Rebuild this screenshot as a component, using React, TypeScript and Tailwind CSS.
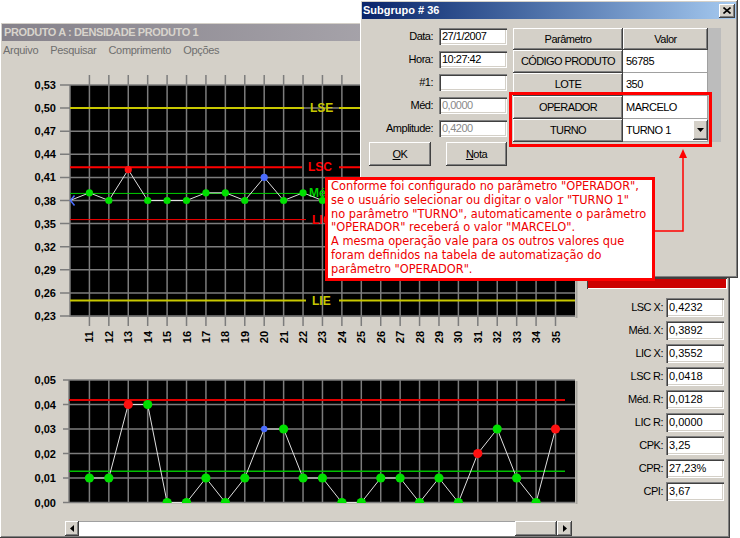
import React from "react";

const raised =
  "shadow-[inset_-1px_-1px_0_#404040,inset_1px_1px_0_#ffffff,inset_-2px_-2px_0_#808080]";
const sunken =
  "shadow-[inset_1px_1px_0_#808080,inset_2px_2px_0_#404040,inset_-1px_-1px_0_#ffffff,inset_-2px_-2px_0_#d4d0c8]";

const gx = (k: number) => 70 + 19.42 * k;
const uy = (v: number) => 85 + ((0.53 - v) / 0.03) * 23.1;
const ly = (v: number) => 380 + ((0.05 - v) / 0.05) * 122.5;

const GREEN = "#00e000";
const RED = "#ff1010";
const BLUE = "#4a6cff";

// subgroup 11..35 : [mean, range, colour of mean marker, colour of range marker]
const points: [number, number, string, string][] = [
  [0.39, 0.01, GREEN, GREEN],
  [0.38, 0.01, GREEN, GREEN],
  [0.42, 0.04, RED, RED],
  [0.38, 0.04, GREEN, GREEN],
  [0.38, 0.0, GREEN, GREEN],
  [0.38, 0.0, GREEN, GREEN],
  [0.39, 0.01, GREEN, GREEN],
  [0.39, 0.0, GREEN, GREEN],
  [0.38, 0.01, GREEN, GREEN],
  [0.41, 0.03, BLUE, BLUE],
  [0.38, 0.03, GREEN, GREEN],
  [0.39, 0.01, GREEN, GREEN],
  [0.38, 0.01, GREEN, GREEN],
  [0.38, 0.0, GREEN, GREEN],
  [0.39, 0.0, GREEN, GREEN],
  [0.38, 0.01, GREEN, GREEN],
  [0.39, 0.01, GREEN, GREEN],
  [0.38, 0.0, GREEN, GREEN],
  [0.38, 0.01, GREEN, GREEN],
  [0.39, 0.0, GREEN, GREEN],
  [0.38, 0.02, GREEN, RED],
  [0.39, 0.03, GREEN, GREEN],
  [0.38, 0.01, GREEN, GREEN],
  [0.38, 0.0, GREEN, GREEN],
  [0.39, 0.03, GREEN, RED],
];

const upperTicks = ["0,53", "0,50", "0,47", "0,44", "0,41", "0,38", "0,35", "0,32", "0,29", "0,26", "0,23"];
const lowerTicks = ["0,05", "0,04", "0,03", "0,02", "0,01", "0,00"];

const limits = [
  { label: "LSE", v: 0.5, color: "#c8c800", tx: 310, w: 2 },
  { label: "LSC", v: 0.4232, color: "#ff0000", tx: 308, w: 2 },
  { label: "Méd", v: 0.3892, color: "#00d000", tx: 309, w: 1 },
  { label: "LIC", v: 0.3552, color: "#ff0000", tx: 312, w: 1 },
  { label: "LIE", v: 0.25, color: "#c8c800", tx: 312, w: 2 },
];

function Charts() {
  const cols = points.map((_, i) => i + 1);
  const upperLine = [`70,${uy(0.38)}`, ...points.map((p, i) => `${gx(i + 1)},${uy(p[0])}`)].join(" ");
  const lowerLine = points.map((p, i) => `${gx(i + 1)},${ly(p[1])}`).join(" ");
  return (
    <svg width={578} height={461} fontFamily="'Liberation Sans', Arial, sans-serif">
      <defs>
        <clipPath id="lowclip">
          <rect x={69} y={378} width={506} height={125} />
        </clipPath>
      </defs>
      <g transform="translate(-2,-59)">
        {/* X-bar chart */}
        <rect x={70} y={85} width={505} height={231.5} fill="#000" />
        <line x1={576.5} x2={576.5} y1={86} y2={318} stroke="#a8a6a0" strokeWidth={2} />
        {upperTicks.map((t, i) => (
          <g key={t}>
            <line x1={60} x2={575} y1={85 + 23.1 * i} y2={85 + 23.1 * i} stroke="#7c7c7c" strokeWidth={1.5} />
            <text x={56} y={85 + 23.1 * i} textAnchor="end" dominantBaseline="central" fontSize={11} fontWeight={700} fill="#000">
              {t}
            </text>
          </g>
        ))}
        <line x1={70} x2={70} y1={85} y2={317} stroke="#7c7c7c" strokeWidth={1.5} />
        {cols.map((k) => (
          <g key={k}>
            <line x1={gx(k)} x2={gx(k)} y1={75} y2={326} stroke="#7c7c7c" strokeWidth={1.5} />
            <text
              x={0}
              y={0}
              transform={`translate(${gx(k)},337) rotate(-90)`}
              textAnchor="middle"
              dominantBaseline="central"
              fontSize={11}
              fontWeight={700}
              fill="#000"
            >
              {k + 10}
            </text>
          </g>
        ))}
        {limits.map((l) => (
          <g key={l.label}>
            <line x1={70} x2={l.tx - 6} y1={uy(l.v)} y2={uy(l.v)} stroke={l.color} strokeWidth={l.w} />
            <line x1={339} x2={575} y1={uy(l.v)} y2={uy(l.v)} stroke={l.color} strokeWidth={l.w} />
            <text x={l.tx} y={uy(l.v)} dominantBaseline="central" fontSize={12} fontWeight={700} fill={l.color}>
              {l.label}
            </text>
          </g>
        ))}
        <polyline points={upperLine} fill="none" stroke="#e0e0e0" strokeWidth={1} />
        <polyline points={`74.5,195.5 70.5,200.5 74.5,205.5`} fill="none" stroke={BLUE} strokeWidth={1.5} />
        {points.map((p, i) => (
          <circle key={i} cx={gx(i + 1)} cy={uy(p[0])} r={3.6} fill={p[2]} />
        ))}

        {/* R chart */}
        <rect x={69} y={380} width={506} height={122.5} fill="#000" />
        <line x1={576.5} x2={576.5} y1={381} y2={504} stroke="#a8a6a0" strokeWidth={2} />
        {lowerTicks.map((t, i) => (
          <g key={t}>
            <line x1={63} x2={575} y1={380 + 24.5 * i} y2={380 + 24.5 * i} stroke="#7c7c7c" strokeWidth={1.5} />
            <text x={56} y={380 + 24.5 * i} textAnchor="end" dominantBaseline="central" fontSize={11} fontWeight={700} fill="#000">
              {t}
            </text>
          </g>
        ))}
        <line x1={69} x2={69} y1={380} y2={503} stroke="#7c7c7c" strokeWidth={1.5} />
        {cols.map((k) => (
          <line key={k} x1={gx(k)} x2={gx(k)} y1={380} y2={502.5} stroke="#7c7c7c" strokeWidth={1.5} />
        ))}
        <line x1={69} x2={565} y1={ly(0.0418)} y2={ly(0.0418)} stroke="#e00000" strokeWidth={2} />
        <line x1={69} x2={565} y1={ly(0.0128)} y2={ly(0.0128)} stroke="#00c000" strokeWidth={1.5} />
        <g clipPath="url(#lowclip)">
          <polyline points={lowerLine} fill="none" stroke="#e0e0e0" strokeWidth={1} />
          {points.map((p, i) =>
            p[3] === BLUE ? (
              <circle key={i} cx={gx(i + 1)} cy={ly(p[1])} r={3.2} fill={BLUE} />
            ) : (
              <circle key={i} cx={gx(i + 1)} cy={ly(p[1])} r={4.6} fill={p[3]} />
            )
          )}
        </g>
      </g>
    </svg>
  );
}

function Arrow({ dir }: { dir: "left" | "right" }) {
  return (
    <svg width={4} height={7} viewBox="0 0 4 7">
      {dir === "left" ? <polygon points="4,0 0,3.5 4,7" fill="#000" /> : <polygon points="0,0 4,3.5 0,7" fill="#000" />}
    </svg>
  );
}

const stats = [
  ["LSC X:", "0,4232"],
  ["Méd. X:", "0,3892"],
  ["LIC X:", "0,3552"],
  ["LSC R:", "0,0418"],
  ["Méd. R:", "0,0128"],
  ["LIC R:", "0,0000"],
  ["CPK:", "3,25"],
  ["CPR:", "27,23%"],
  ["CPI:", "3,67"],
];

function MainWindow() {
  return (
    <div className={`w-[730px] h-[516px] bg-[#d4d0c8] p-[2px] flex flex-col ${raised}`}>
      <div className="h-[17px] shrink-0 flex items-center pl-[2px] bg-gradient-to-r from-[#86828b] to-[#c6c4c8]">
        <span className="text-[11px] font-bold text-[#d8d4cc] tracking-[-0.4px] whitespace-nowrap">
          PRODUTO A : DENSIDADE PRODUTO 1
        </span>
      </div>
      <div className="h-[18px] shrink-0 flex items-center gap-[12px] pl-[1px] text-[11px] tracking-[-0.3px] text-[#6e6e6e]">
        <span>Arquivo</span>
        <span>Pesquisar</span>
        <span>Comprimento</span>
        <span>Opções</span>
      </div>
      <div className="flex flex-1">
        <div className="w-[578px] flex flex-col">
          <Charts />
          <div className="ml-[63px] mt-[1px] w-[507px] h-[15px] flex">
            <div className={`w-[14px] h-[15px] bg-[#d4d0c8] flex items-center justify-center ${raised}`}>
              <Arrow dir="left" />
            </div>
            <div className="w-[436px] h-[15px] bg-white border-t border-[#a0a0a0]" />
            <div className={`w-[42px] h-[15px] bg-[#d4d0c8] ${raised}`} />
            <div className={`w-[15px] h-[15px] bg-[#d4d0c8] flex items-center justify-center ${raised}`}>
              <Arrow dir="right" />
            </div>
          </div>
        </div>
        <div className="flex-1 flex flex-col pt-[219px]">
          <div className="ml-[7px] w-[140px] h-[11px] bg-[#cc0000] shadow-[inset_1px_1px_0_#404040,inset_-1px_-1px_0_#ffffff]" />
          <div className="mt-[9px] flex flex-col gap-[4px] pr-[4px]">
            {stats.map(([l, v]) => (
              <div key={l} className="h-[19px] flex items-center justify-end">
                <span className="text-[11px] tracking-[-0.5px] whitespace-nowrap">{l}</span>
                <div className={`ml-[3px] w-[58px] h-[19px] bg-white flex items-center pl-[3px] text-[11px] ${sunken}`}>{v}</div>
              </div>
            ))}
          </div>
        </div>
      </div>
    </div>
  );
}

const fields = [
  ["Data:", "27/1/2007", false],
  ["Hora:", "10:27:42", false],
  ["#1:", "", false],
  ["Méd:", "0,0000", true],
  ["Amplitude:", "0,4200", true],
] as const;

const params = [
  ["CÓDIGO PRODUTO", "56785"],
  ["LOTE", "350"],
  ["OPERADOR", "MARCELO"],
  ["TURNO", "TURNO 1"],
];

function Dialog() {
  return (
    <div className={`absolute left-[360px] top-0 w-[378px] h-[278px] bg-[#d4d0c8] p-[2px] flex flex-col ${raised}`}>
      <div className="h-[17px] shrink-0 flex items-center justify-between pl-[1px] pr-[1px] bg-gradient-to-r from-[#0a246a] to-[#a6caf0]">
        <span className="text-[11px] font-bold text-white whitespace-nowrap">Subgrupo # 36</span>
        <div className={`w-[16px] h-[14px] bg-[#d4d0c8] flex items-center justify-center ${raised}`}>
          <svg width={8} height={7} viewBox="0 0 8 7">
            <path d="M0.5 0.5 L7.5 6.5 M7.5 0.5 L0.5 6.5" stroke="#000" strokeWidth={1.6} />
          </svg>
        </div>
      </div>
      <div className="flex pt-[9px] text-[11px] tracking-[-0.5px]">
        <div className="w-[145px] flex flex-col">
          <div className="flex flex-col gap-[6px]">
            {fields.map(([l, v, dim]) => (
              <div key={l} className="flex items-center justify-end gap-[6px] h-[17px]">
                <span className="whitespace-nowrap">{l}</span>
                <div
                  className={`w-[68px] h-[17px] bg-white flex items-center pl-[3px] ${sunken} ${dim ? "text-[#8a8a8a]" : "text-black"}`}
                >
                  {v}
                </div>
              </div>
            ))}
          </div>
          <div className="mt-[5px] flex">
            <div className={`ml-[7px] w-[62px] h-[24px] flex items-center justify-center ${raised}`}>
              <span>
                <span className="underline">O</span>K
              </span>
            </div>
            <div className={`ml-[15px] w-[61px] h-[24px] flex items-center justify-center ${raised}`}>
              <span>
                <span className="underline">N</span>ota
              </span>
            </div>
          </div>
        </div>
        <div className="ml-[6px] w-[208px] h-[114px] bg-[#bcbcbc] grid grid-cols-[110px_85px] grid-rows-[22px_23px_23px_23px_23px] content-start">
          <div className={`bg-[#d4d0c8] flex items-center justify-center ${raised}`}>Parâmetro</div>
          <div className={`bg-[#d4d0c8] flex items-center justify-center ${raised}`}>Valor</div>
          {params.map(([p, v]) => (
            <React.Fragment key={p}>
              <div className={`bg-[#d4d0c8] flex items-center justify-center whitespace-nowrap tracking-[-0.6px] ${raised}`}>{p}</div>
              <div className="bg-white flex items-center justify-between pl-[3px] shadow-[inset_-1px_-1px_0_#a0a0a0]">
                <span className="whitespace-nowrap">{v}</span>
                {p === "TURNO" && (
                  <div className={`w-[15px] h-[20px] mb-[1px] bg-[#d4d0c8] flex items-center justify-center ${raised}`}>
                    <svg width={7} height={4} viewBox="0 0 7 4">
                      <polygon points="0,0 7,0 3.5,4" fill="#000" />
                    </svg>
                  </div>
                )}
              </div>
            </React.Fragment>
          ))}
        </div>
      </div>
    </div>
  );
}

export default function App() {
  return (
    <div className="relative w-[740px] h-[538px] overflow-hidden bg-white pt-[22px] font-['Liberation_Sans',Arial,sans-serif] text-black">
      <MainWindow />
      <Dialog />
      {/* highlight around the automated parameters */}
      <div className="absolute left-[509px] top-[92px] w-[203px] h-[55px] border-[3px] border-[#ff0000]" />
      {/* connector arrow */}
      <svg className="absolute left-[650px] top-[145px]" width={45} height={92} viewBox="0 0 45 92">
        <polygon points="29,13 37,13 33,4" fill="#ff0000" />
        <polyline points="33,12 33,86 5,86" fill="none" stroke="#ff0000" strokeWidth={1.5} />
      </svg>
      <div className="absolute left-[325px] top-[177px] w-[330px] h-[104px] border-[3px] border-[#ff0000] bg-white pl-[3px] pt-[0px] font-['DejaVu_Sans',sans-serif] text-[11.4px] leading-[13.8px] text-[#ee0000] whitespace-nowrap">
        Conforme foi configurado no parâmetro "OPERADOR",
        <br />
        se o usuário selecionar ou digitar o valor "TURNO 1"
        <br />
        no parâmetro "TURNO", automaticamente o parâmetro
        <br />
        "OPERADOR" receberá o valor "MARCELO".
        <br />
        A mesma operação vale para os outros valores que
        <br />
        foram definidos na tabela de automatização do
        <br />
        parâmetro "OPERADOR".
      </div>
    </div>
  );
}
